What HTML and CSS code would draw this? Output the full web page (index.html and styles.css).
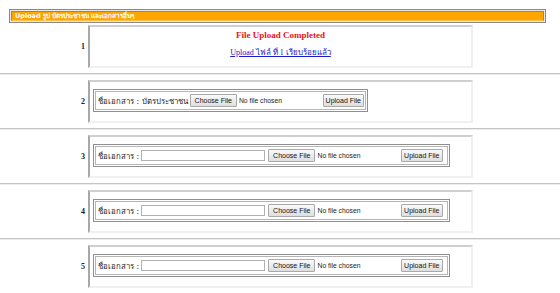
FILE: index.html
```html
<!DOCTYPE html>
<html>
<head>
<meta charset="utf-8">
<link rel="stylesheet" href="styles.css">
</head>
<body>
<div class="header"><div class="header-inner">Upload รูป บัตรประชาชน และเอกสารอื่นๆ</div></div>

<div class="row">
  <div class="num">1</div>
  <div class="box box-done">
    <div class="done-title">File Upload Completed</div>
    <a class="done-link" href="#">Upload ไฟล์ ที่ 1 เรียบร้อยแล้ว</a>
  </div>
</div>
<div class="rule"></div>

<div class="row">
  <div class="num">2</div>
  <div class="box">
    <div class="form form-short"><div class="form-inner">
      <span class="label">ชื่อเอกสาร : บัตรประชาชน</span>
      <span class="file"><span class="btn btn-choose">Choose File</span><span class="nofile">No file chosen</span></span>
      <span class="btn">Upload File</span>
    </div></div>
  </div>
</div>
<div class="rule"></div>

<div class="row">
  <div class="num">3</div>
  <div class="box">
    <div class="form"><div class="form-inner">
      <span class="label">ชื่อเอกสาร :</span>
      <span class="text"></span>
      <span class="file"><span class="btn btn-choose">Choose File</span><span class="nofile">No file chosen</span></span>
      <span class="btn">Upload File</span>
    </div></div>
  </div>
</div>
<div class="rule"></div>

<div class="row">
  <div class="num">4</div>
  <div class="box">
    <div class="form"><div class="form-inner">
      <span class="label">ชื่อเอกสาร :</span>
      <span class="text"></span>
      <span class="file"><span class="btn btn-choose">Choose File</span><span class="nofile">No file chosen</span></span>
      <span class="btn">Upload File</span>
    </div></div>
  </div>
</div>
<div class="rule"></div>

<div class="row">
  <div class="num">5</div>
  <div class="box">
    <div class="form"><div class="form-inner">
      <span class="label">ชื่อเอกสาร :</span>
      <span class="text"></span>
      <span class="file"><span class="btn btn-choose">Choose File</span><span class="nofile">No file chosen</span></span>
      <span class="btn">Upload File</span>
    </div></div>
  </div>
</div>
</body>
</html>
```

FILE: styles.css
```css
html, body {
  margin: 0;
  padding: 0;
  background: #ffffff;
}
body {
  font-family: "Liberation Serif", "Noto Sans", serif;
  overflow: hidden;
}
.header {
  margin: 9px 14px 0 9px;
  border: 1px solid #8a8a8a;
  background: #e8e8e8;
  padding: 1px;
}
.header-inner {
  background: #ffa500;
  border: 1px solid #c78300;
  border-bottom-color: #ffc04a;
  box-sizing: border-box;
  height: 10px;
  color: #ffffff;
  font-family: "DejaVu Sans", "Noto Sans", sans-serif;
  font-weight: bold;
  font-size: 6.5px;
  line-height: 8px;
  padding-left: 3px;
  white-space: nowrap;
}
.row {
  display: grid;
  grid-template-columns: 88px 385px;
  margin-top: 2px;
}
.rule + .row {
  margin-top: 0;
}
.num {
  display: flex;
  align-items: center;
  justify-content: flex-end;
  padding-right: 3px;
  font-size: 8px;
  font-weight: bold;
  color: #222;
}
.box {
  height: 43px;
  box-sizing: border-box;
  border-left: 2px solid #a8a8a8;
  border-top: 2px solid #cfcfcf;
  border-right: 2px solid #f0f0f0;
  border-bottom: 2px solid #f0f0f0;
  padding: 7px 0 0 3px;
}
.box-done {
  display: flex;
  flex-direction: column;
  align-items: center;
  padding: 2px 0 0 0;
}
.done-title {
  color: #e8141b;
  font-weight: bold;
  font-size: 9px;
  line-height: 12px;
}
.done-link {
  color: #1a1acc;
  font-size: 8px;
  line-height: 12px;
  margin-top: 6px;
}
.rule {
  margin: 5px 0;
  height: 0;
  border-top: 1px solid #c4c4c4;
  border-bottom: 1px solid #ececec;
}
.form {
  width: 271px;
  border: 1px solid #8f8f8f;
  padding: 1px;
  background: #fff;
}
.form:not(.form-short) {
  width: 353px;
}
.form-inner {
  border: 1px solid #b5b5b5;
  height: 17px;
  display: flex;
  align-items: center;
  padding-left: 2px;
  font-family: "DejaVu Sans", "Noto Sans", sans-serif;
  font-size: 7.8px;
  color: #222;
  white-space: nowrap;
}
.label {
  margin-right: 2px;
}
.text {
  width: 122px;
  height: 9px;
  border: 1px solid #b0b0b0;
  background: #fff;
  margin-right: 3px;
}
.file {
  display: flex;
  align-items: center;
  width: 133px;
  flex: none;
}
.btn {
  display: inline-block;
  font-family: "Liberation Sans", Arial, sans-serif;
  font-size: 7px;
  line-height: 9px;
  padding: 1px 2px;
  border: 1px solid #a9a9a9;
  border-radius: 1px;
  background: linear-gradient(#fafafa, #dedede);
  color: #111;
}
.btn-choose {
  padding: 1px 4px;
}
.nofile {
  font-family: "Liberation Sans", Arial, sans-serif;
  font-size: 6.8px;
  margin-left: 2px;
  color: #222;
}
```
